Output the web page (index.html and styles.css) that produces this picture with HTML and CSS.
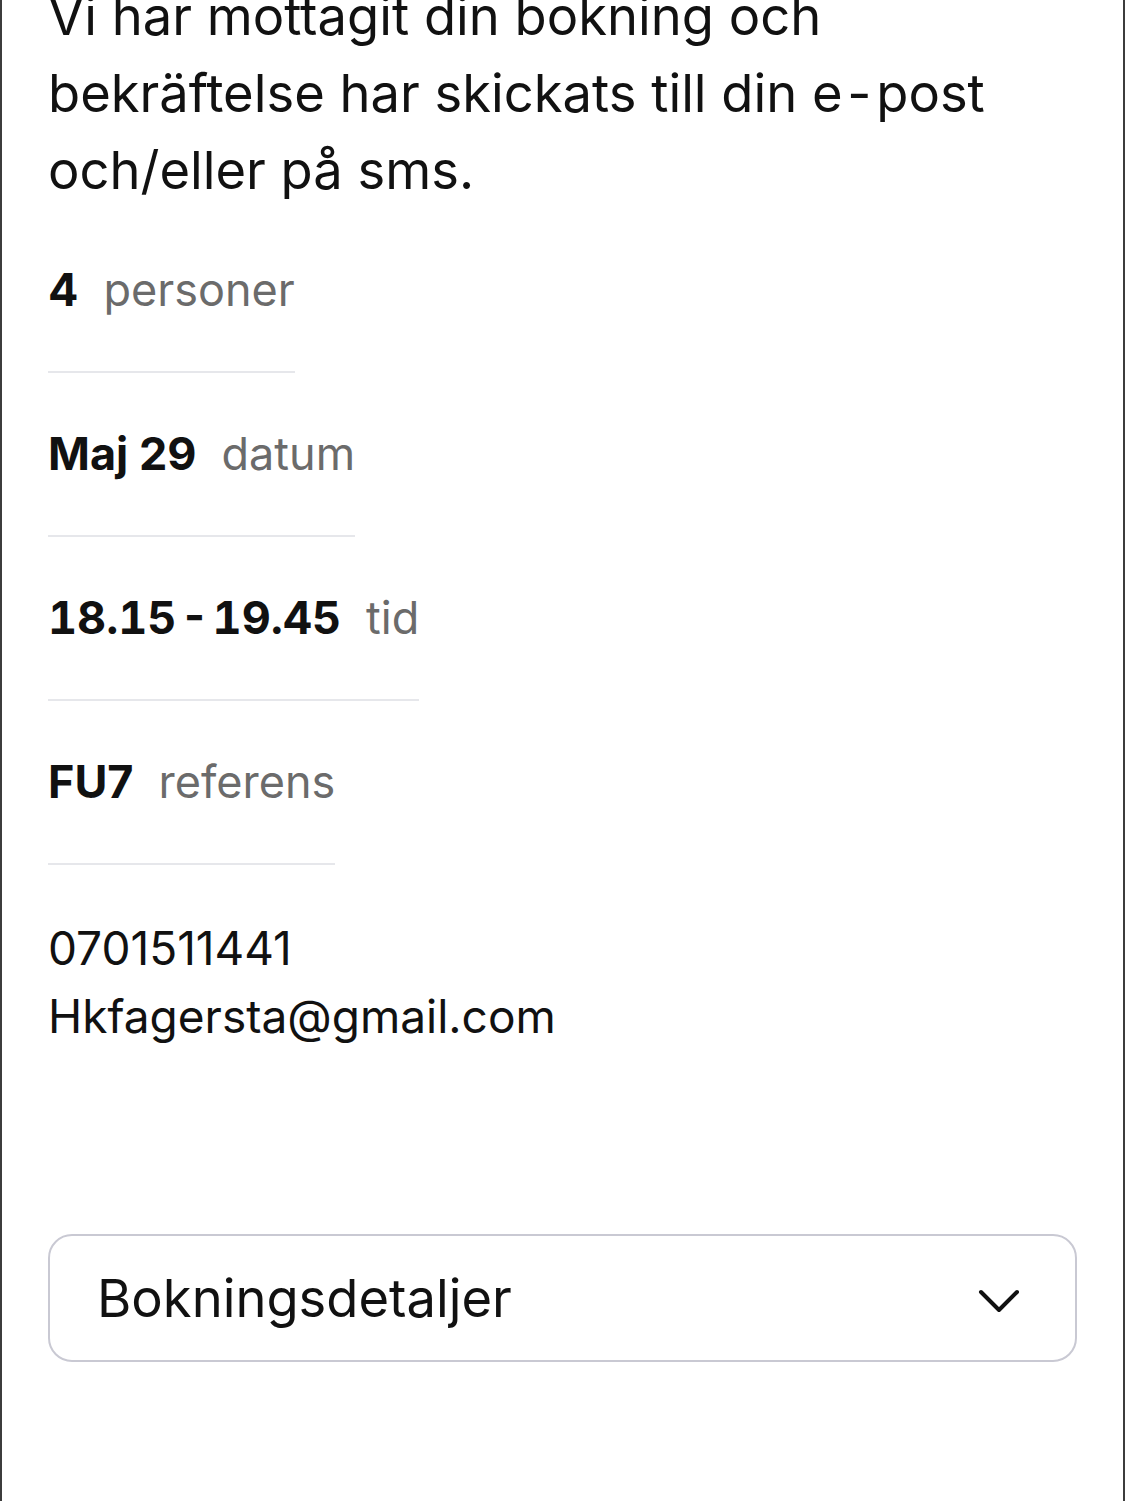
FILE: index.html
```html
<!DOCTYPE html>
<html lang="sv">
<head>
  <meta charset="UTF-8">
  <meta name="viewport" content="width=device-width, initial-scale=1.0">
  <title>Bokningsbekräftelse</title>
  <link rel="stylesheet" href="styles.css">
</head>
<body>
  <div class="page">
    <p class="intro">Vi har mottagit din bokning och bekräftelse har skickats till din e&#8202;-&#8202;post och/eller på sms.</p>

    <div class="summary">
      <div class="summary-item"><span class="value">4</span><span class="label">personer</span></div>
      <div class="summary-item"><span class="value">Maj 29</span><span class="label">datum</span></div>
      <div class="summary-item"><span class="value time">18.15&#8202;-&#8202;19.45</span><span class="label">tid</span></div>
      <div class="summary-item"><span class="value">FU7</span><span class="label">referens</span></div>
    </div>

    <div class="contact">
      <div>0701511441</div>
      <div>Hkfagersta@gmail.com</div>
    </div>

    <button class="details-toggle">
      <span>Bokningsdetaljer</span>
      <svg class="chevron" width="42" height="24" viewBox="0 0 42 24" fill="none" stroke="#111" stroke-width="4" stroke-linecap="round" stroke-linejoin="round">
        <path d="M3 3 L21 21 L39 3"/>
      </svg>
    </button>
  </div>
</body>
</html>
```

FILE: styles.css
```css
body {
  margin: 0;
  background: #fff;
  font-family: Inter, 'Noto Sans', sans-serif;
  color: #111;
  overflow: hidden;
}

.page {
  box-sizing: border-box;
  width: 1125px;
  height: 1501px;
  padding: 0 46px;
  border-left: 2px solid #3c3c3c;
  border-right: 2px solid #3c3c3c;
  display: flex;
  flex-direction: column;
}

/* scrolled view: first line is cut off at the top */
.intro {
  margin: -22px 0 0;
  font-size: 52.5px;
  line-height: 77px;
}

.summary {
  margin-top: 53px;
  display: flex;
  flex-direction: column;
  align-items: flex-start;
  gap: 53px;
}

.summary-item {
  display: flex;
  gap: 25px;
  font-size: 45px;
  line-height: 56px;
  padding-bottom: 53px;
  border-bottom: 2px solid #e6e7eb;
}

.summary-item .value {
  font-weight: 700;
}

.summary-item .time {
  font-variant-numeric: tabular-nums;
}

.summary-item .label {
  color: #6b6b6b;
}

.contact {
  margin-top: 49px;
  font-size: 46px;
  line-height: 68px;
}

.details-toggle {
  margin-top: 184px;
  height: 128px;
  display: flex;
  align-items: center;
  justify-content: space-between;
  padding: 0 55px 0 47px;
  background: #fff;
  border: 2px solid #c9c9d3;
  border-radius: 24px;
  font-family: inherit;
  font-size: 52.5px;
  color: #111;
  cursor: pointer;
}

.chevron {
  margin-top: 6px;
}
```
